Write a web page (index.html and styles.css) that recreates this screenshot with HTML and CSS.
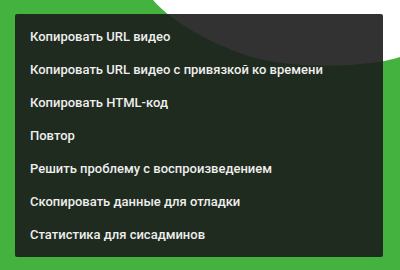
FILE: index.html
```html
<!DOCTYPE html>
<html lang="ru">
<head>
<meta charset="utf-8">
<link rel="stylesheet" href="styles.css">
</head>
<body>
<div class="stage">
  <ul class="menu">
    <li class="item">Копировать URL видео</li>
    <li class="item">Копировать URL видео с привязкой ко времени</li>
    <li class="item">Копировать HTML-код</li>
    <li class="item">Повтор</li>
    <li class="item">Решить проблему с воспроизведением</li>
    <li class="item">Скопировать данные для отладки</li>
    <li class="item">Статистика для сисадминов</li>
  </ul>
</div>
</body>
</html>
```
FILE: styles.css
```css
html, body {
  margin: 0;
  padding: 0;
}
.stage {
  width: 400px;
  height: 270px;
  box-sizing: border-box;
  padding: 14px 17px 0 15px;
  background-color: #43b23f;
  background-image: url("data:image/svg+xml,%3Csvg xmlns='http://www.w3.org/2000/svg' width='400' height='270' viewBox='0 0 400 270'%3E%3Cpath d='M153 0 C173 24 225 51 260 59 C300 69 370 67 400 57 L400 0 Z' fill='%23ffffff'/%3E%3C/svg%3E");
  background-repeat: no-repeat;
  overflow: hidden;
}
.menu {
  list-style: none;
  margin: 0;
  padding: 6px 0;
  width: 368px;
  height: 243px;
  box-sizing: border-box;
  background: rgba(28, 28, 28, 0.9);
  border-radius: 2px;
  font-family: Roboto, "Noto Sans", sans-serif;
  font-size: 13px;
  font-weight: 500;
  color: #eeeeee;
}
.item {
  height: 33px;
  display: flex;
  align-items: center;
  padding: 0 15px;
  white-space: nowrap;
}
```
